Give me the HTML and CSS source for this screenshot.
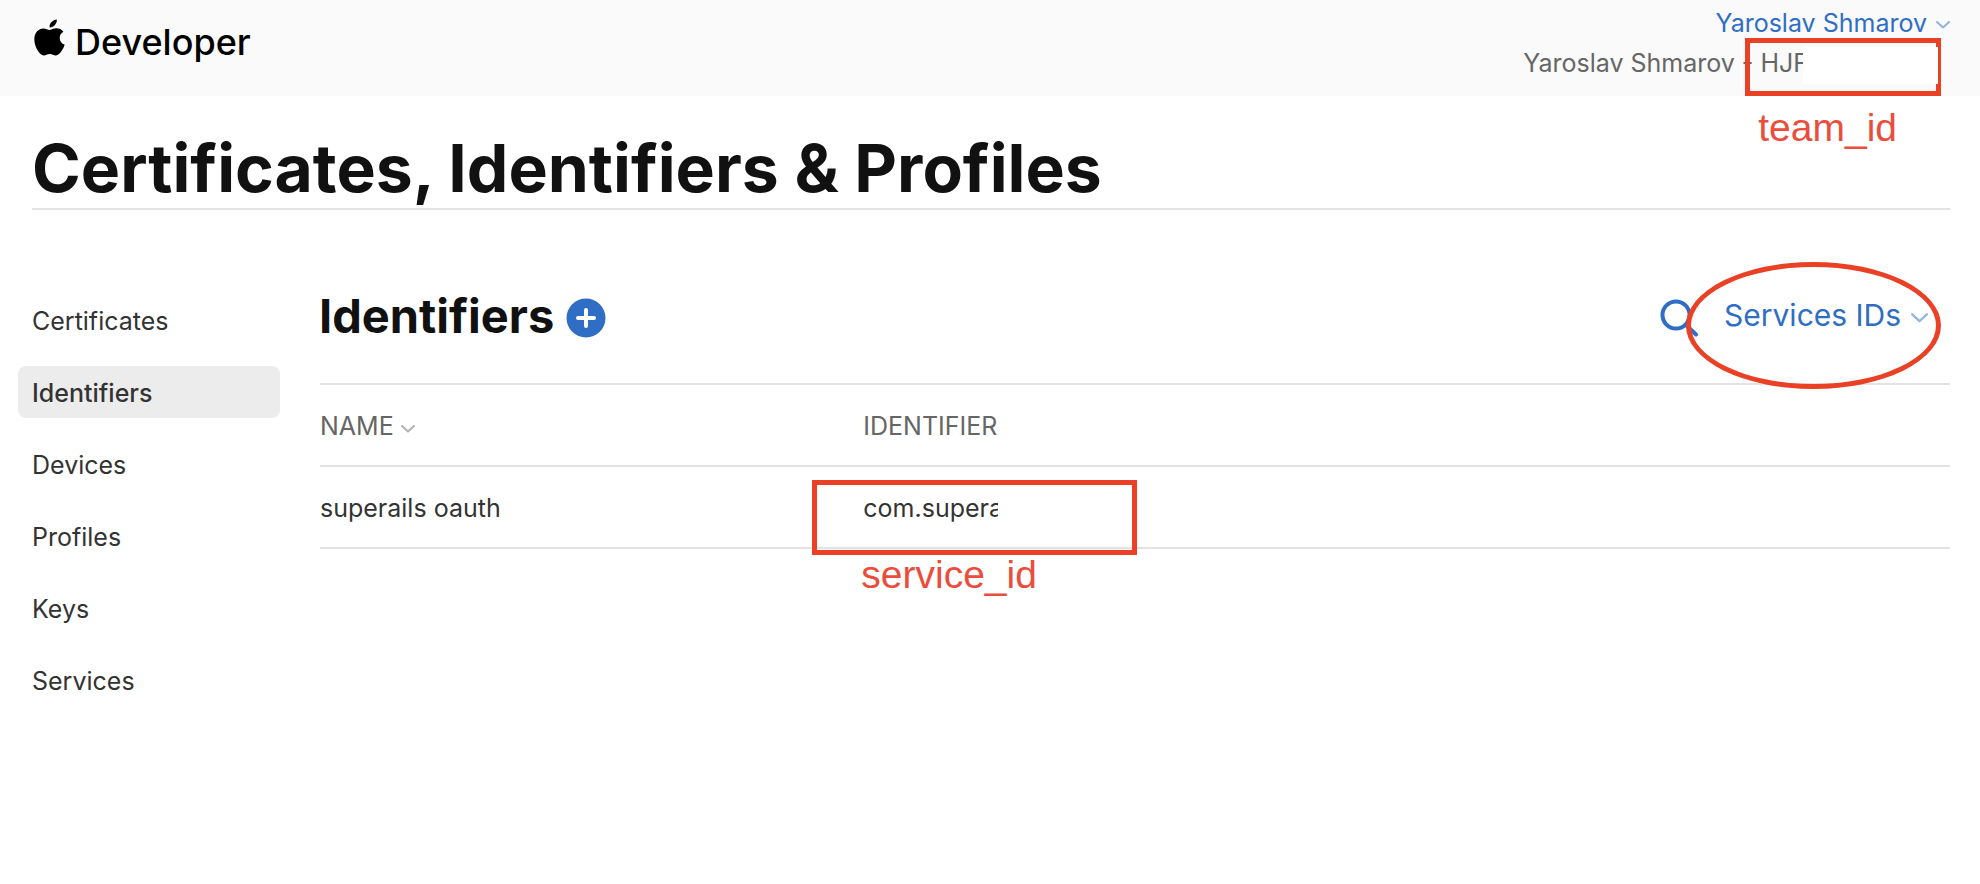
FILE: index.html
```html
<!DOCTYPE html>
<html lang="en">
<head>
<meta charset="utf-8">
<meta name="viewport" content="width=device-width, initial-scale=1">
<title>Certificates, Identifiers &amp; Profiles</title>
<link rel="stylesheet" href="styles.css">
</head>
<body>
<header class="topbar">
  <a class="brand" href="#">
    <svg class="brand-mark" viewBox="0 0 31 37" aria-hidden="true">
      <path d="M22.8 0.4c.3 2-.6 4-1.900 5.500-1.300 1.500-3.300 2.600-5.300 2.500-.3-2 .7-4 1.900-5.300C18.800 1.600 21 .5 22.800.4zM29.400 12.700c-2.300 1.400-3.700 3.400-3.700 6.200 0 3.200 2 5.700 5 6.800-.7 2.200-1.800 4.300-3.200 6.300-1.600 2.300-3.200 4.400-5.700 4.400-2.400 0-3.200-1.400-6-1.400s-3.700 1.400-6 1.400c-2.400 0-4.200-2.200-5.800-4.500C1.700 28.500.3 24.300.3 20.300c0-6.900 4.400-10.900 9-10.900 2.500 0 4.700 1.600 6.300 1.600 1.500 0 3.900-1.700 6.900-1.700 2.700 0 5.200 1.100 6.900 3.400z"/>
    </svg>
    <span>Developer</span>
  </a>
  <div class="account">
    <button class="account-name" type="button">Yaroslav Shmarov
      <svg class="chevron" viewBox="0 0 14 8" aria-hidden="true"><path d="M1 1l6 5.500L13 1"/></svg>
    </button>
    <div class="account-team">Yaroslav Shmarov - HJF
      <span class="outline team-outline"></span>
      <span class="redaction team-redaction"></span>
      <span class="note team-note">team_id</span>
    </div>
  </div>
</header>

<div class="page">
  <h1 class="page-title">Certificates, Identifiers &amp; Profiles</h1>
  <div class="columns">
    <nav class="sidebar">
      <a href="#">Certificates</a>
      <a class="active" href="#" aria-current="page">Identifiers</a>
      <a href="#">Devices</a>
      <a href="#">Profiles</a>
      <a href="#">Keys</a>
      <a href="#">Services</a>
    </nav>
    <main class="content">
      <div class="toolbar">
        <h2>Identifiers</h2>
        <button class="add" type="button" aria-label="Add identifier">
          <svg viewBox="0 0 40 40" aria-hidden="true"><circle cx="20" cy="20" r="19.500"/><path d="M20 12v16M12 20h16"/></svg>
        </button>
        <button class="search" type="button" aria-label="Search">
          <svg viewBox="0 0 40 40" aria-hidden="true"><circle cx="16" cy="17" r="13.500"/><path d="M26 27l10 9.500"/></svg>
        </button>
        <div class="filter">
          <select aria-label="Identifier type"><option>Services IDs</option></select>
          <svg class="chevron" viewBox="0 0 14 8" aria-hidden="true"><path d="M1 1l6 5.500L13 1"/></svg>
          <span class="ellipse"></span>
        </div>
      </div>
      <table class="records">
        <thead>
          <tr>
            <th scope="col">NAME <svg class="chevron" viewBox="0 0 14 8" aria-hidden="true"><path d="M1 1l6 5.500L13 1"/></svg></th>
            <th scope="col">IDENTIFIER</th>
            <th></th>
          </tr>
        </thead>
        <tbody>
          <tr>
            <td>superails oauth</td>
            <td class="service">com.supera
              <span class="redaction service-redaction"></span>
              <span class="outline service-outline"></span>
              <span class="note service-note">service_id</span>
            </td>
            <td></td>
          </tr>
        </tbody>
      </table>
    </main>
  </div>
</div>
</body>
</html>
```
FILE: styles.css
```css
* { box-sizing: border-box; }

body {
  margin: 0;
  background: #fff;
  color: #333;
  font: 400 25px/32px Inter, "Liberation Sans", sans-serif;
}

a { color: inherit; text-decoration: none; }

button {
  padding: 0;
  border: 0;
  background: none;
  color: inherit;
  font: inherit;
  cursor: pointer;
}

svg { display: block; }

.chevron {
  display: inline-block;
  width: 14px;
  height: 8px;
  fill: none;
  stroke: currentColor;
  stroke-width: 2;
  stroke-linecap: round;
  stroke-linejoin: round;
  opacity: .5;
}

.topbar {
  display: flex;
  justify-content: space-between;
  height: 96px;
  padding: 0 30px 0 34px;
  background: #fafafa;
}

.brand {
  display: flex;
  align-items: flex-start;
  gap: 10px;
  padding-top: 19px;
  color: #000;
  font-size: 36px;
  font-weight: 500;
  line-height: 46px;
}

.brand-mark { width: 31px; height: 37px; }

.account {
  display: flex;
  flex-direction: column;
  align-items: flex-end;
  gap: 8px;
  padding-top: 7px;
}

.account-name {
  display: flex;
  align-items: center;
  gap: 9px;
  color: #2f6ec4;
}

.account-name .chevron { margin-top: 4px; }

.account-team {
  position: relative;
  padding-right: 142px;
  color: #666;
}

.outline {
  position: absolute;
  border: 5px solid #ea4025;
}

.note {
  position: absolute;
  color: #eb4d3d;
  font: 39px/44px "Liberation Sans", sans-serif;
}

.redaction { position: absolute; background: #fff; }

.team-outline { top: -9px; right: 9px; width: 196px; height: 58px; }
.team-redaction { top: 0; right: 12px; width: 135px; height: 37px; }
.team-note { top: 59px; right: 53px; }

.page { padding: 32px 30px 0 32px; }

.page-title {
  margin: 0;
  border-bottom: 2px solid #e3e3e3;
  color: #111;
  font-size: 66px;
  font-weight: 700;
  line-height: 80px;
}

.columns { display: flex; gap: 40px; }

.sidebar {
  display: flex;
  flex: 0 0 262px;
  flex-direction: column;
  gap: 20px;
  margin-left: -14px;
  padding-top: 84px;
}

.sidebar a {
  padding: 11px 14px 9px;
  border-radius: 8px;
}

.sidebar .active { background: #ececec; font-weight: 500; }

.content { flex: 1; min-width: 0; padding-top: 76px; }

.toolbar {
  display: flex;
  align-items: center;
  height: 64px;
  margin-bottom: 33px;
}

.toolbar h2 {
  margin: 0 0 0 -1px;
  padding-bottom: 4px;
  color: #111;
  font-size: 47px;
  font-weight: 700;
  line-height: 60px;
}

.add svg { width: 40px; height: 40px; margin-left: 12px; fill: #2f6ec4; }
.add path { stroke: #fff; stroke-width: 4; stroke-linecap: round; }

.search { margin-left: auto; }

.search svg {
  width: 40px;
  height: 40px;
  fill: none;
  stroke: #2f6ec4;
  stroke-width: 4;
  stroke-linecap: round;
}

.filter {
  position: relative;
  display: flex;
  align-items: center;
  gap: 9px;
  margin-left: 24px;
  padding-right: 22px;
  color: #2f6ec4;
}

.filter select {
  padding: 0 0 6px;
  border: 0;
  appearance: none;
  background: none;
  color: inherit;
  font: 400 30px/40px Inter, "Liberation Sans", sans-serif;
}

.filter .chevron { width: 17px; height: 10px; }

.ellipse {
  position: absolute;
  top: -33px;
  right: 9px;
  width: 255px;
  height: 127px;
  border: 5px solid #ea4025;
  border-radius: 50%;
  pointer-events: none;
}

.records {
  width: 100%;
  border-collapse: collapse;
  border-top: 2px solid #e3e3e3;
  table-layout: fixed;
}

.records th,
.records td {
  height: 82px;
  padding: 2px 0 0;
  border-bottom: 2px solid #e3e3e3;
  text-align: left;
}

.records th { color: #666; font-weight: 400; }
.records .chevron { margin-bottom: 2px; }

.service { position: relative; }
.service-redaction { top: 19px; left: 135px; width: 130px; height: 44px; }
.service-outline { top: 13px; left: -51px; width: 325px; height: 75px; }
.service-note { top: 86px; left: -2px; }
```
